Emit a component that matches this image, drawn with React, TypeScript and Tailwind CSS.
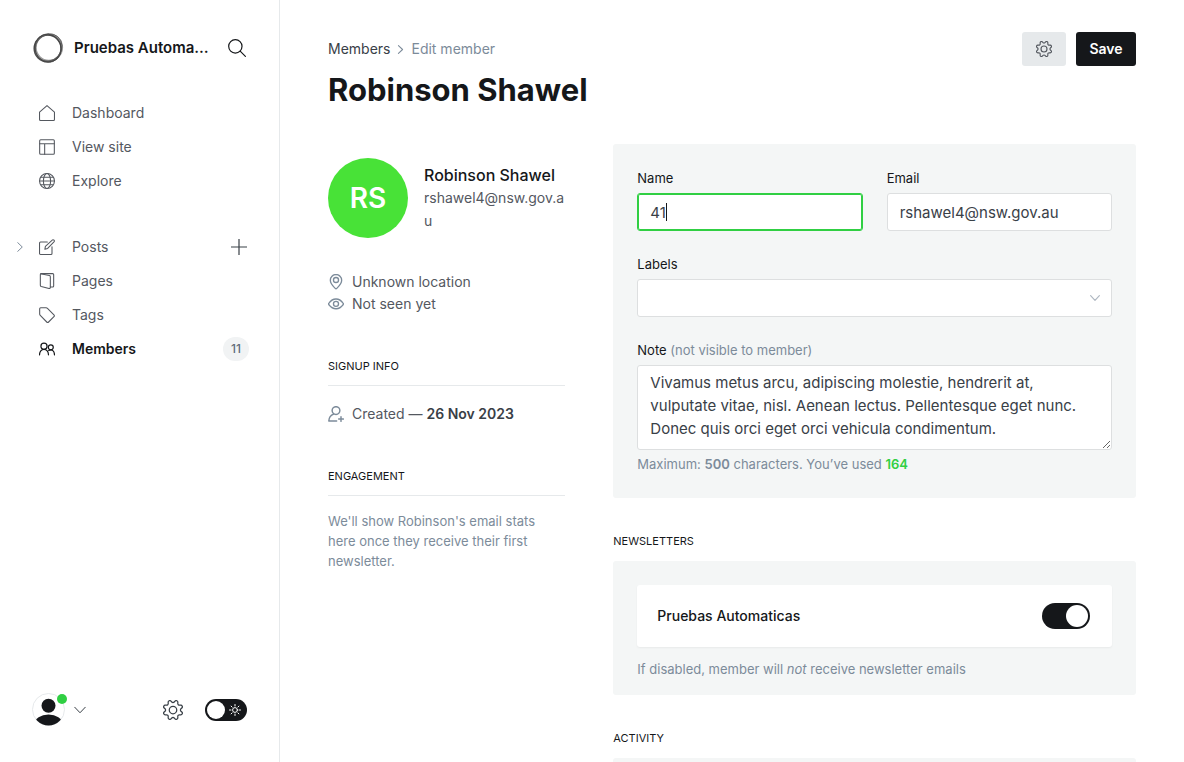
import React, { useEffect, useRef, useState } from "react";

type IconProps = { className?: string; children: React.ReactNode; box?: number; stroke?: number };

function Icon({ className = "size-4", children, box = 24, stroke = 1.5 }: IconProps) {
  return (
    <svg
      aria-hidden="true"
      className={`shrink-0 ${className}`}
      viewBox={`0 0 ${box} ${box}`}
      fill="none"
      stroke="currentColor"
      strokeWidth={stroke}
      strokeLinecap="round"
      strokeLinejoin="round"
    >
      {children}
    </svg>
  );
}

function Gear({ className, stroke = 1.5 }: { className?: string; stroke?: number }) {
  return (
    <Icon className={className} stroke={stroke}>
      <path d="M10.546 2.438a1.957 1.957 0 0 0 2.908 0L14.4 1.4a1.959 1.959 0 0 1 3.41 1.413l-.071 1.4a1.958 1.958 0 0 0 2.051 2.054l1.4-.071a1.959 1.959 0 0 1 1.41 3.41l-1.042.94a1.96 1.96 0 0 0 0 2.909l1.042.94a1.959 1.959 0 0 1-1.413 3.41l-1.4-.071a1.958 1.958 0 0 0-2.056 2.056l.071 1.4A1.959 1.959 0 0 1 14.4 22.6l-.941-1.041a1.959 1.959 0 0 0-2.908 0L9.606 22.6A1.959 1.959 0 0 1 6.2 21.192l.072-1.4a1.958 1.958 0 0 0-2.056-2.056l-1.4.071A1.958 1.958 0 0 1 1.4 14.4l1.041-.94a1.96 1.96 0 0 0 0-2.909L1.4 9.606A1.958 1.958 0 0 1 2.809 6.2l1.4.071a1.958 1.958 0 0 0 2.058-2.06L6.2 2.81A1.959 1.959 0 0 1 9.606 1.4z" />
      <circle cx="12" cy="12" r="4.5" />
    </Icon>
  );
}

function Chevron({ className, down = false, stroke = 1.5 }: { className?: string; down?: boolean; stroke?: number }) {
  return (
    <Icon className={className} stroke={stroke}>
      {down ? <path d="M1.5 6.5 12 17.5 22.5 6.5" /> : <path d="M6.5 1.5 17.5 12 6.5 22.5" />}
    </Icon>
  );
}

function Logo() {
  return (
    <svg aria-hidden="true" className="size-8 shrink-0" viewBox="0 0 32 32" fill="none">
      <circle cx="16.8" cy="15.6" r="13.2" stroke="#9a9a9a" strokeWidth="2.2" />
      <circle cx="15.6" cy="16.4" r="13.4" stroke="#4a4a4a" strokeWidth="1.5" />
      <ellipse cx="16.6" cy="15.6" rx="14.2" ry="12.8" stroke="#5c5c5c" strokeWidth="0.9" transform="rotate(-50 16.6 15.6)" />
      <ellipse cx="16" cy="16.2" rx="13" ry="14.2" stroke="#444" strokeWidth="0.8" transform="rotate(-20 16 16.2)" />
    </svg>
  );
}

const icons = {
  dashboard: <path d="M.8 10.6 12 .9l11.2 9.7v11.1a1.5 1.5 0 0 1-1.5 1.5H2.3a1.5 1.5 0 0 1-1.5-1.5z" />,
  site: (
    <>
      <rect x="1" y="1" width="22" height="22" rx="1.5" />
      <path d="M1 7h22M8.5 7v16" />
    </>
  ),
  explore: (
    <>
      <circle cx="12" cy="12" r="11.2" />
      <ellipse cx="12" cy="12" rx="5.4" ry="11.2" />
      <path d="M.8 12h22.4M2.6 6.5h18.8M2.6 17.5h18.8" />
    </>
  ),
  posts: (
    <>
      <path d="M12.5 4.5H2.3A1.5 1.5 0 0 0 .8 6v15.7a1.5 1.5 0 0 0 1.5 1.5H18a1.5 1.5 0 0 0 1.5-1.5V11.5" />
      <path d="M20.3 1.3a1.9 1.9 0 0 1 2.5 2.6L13 14.2l-4.2 1.2L9.6 11z" />
    </>
  ),
  pages: (
    <>
      <path d="M3.5.9h17A1.5 1.5 0 0 1 22 2.4v17a1.5 1.5 0 0 1-1.5 1.5H17" />
      <path d="M2.2 1.2 15.5 3.6A2 2 0 0 1 17 5.5v16.2a1.5 1.5 0 0 1-2 1.4L3.4 20.2A2 2 0 0 1 2 18.3V2.4A1.5 1.5 0 0 1 3.5.9" />
    </>
  ),
  tags: <path d="M1 2.5A1.5 1.5 0 0 1 2.5 1h8.100a3 3 0 0 1 2.100.9l9.700 9.800a2 2 0 0 1 0 2.800l-8 8a2 2 0 0 1-2.800 0l-9.700-9.800A3 3 0 0 1 1 10.600z" />,
  members: (
    <>
      <circle cx="7.5" cy="7.8" r="4.6" />
      <path d="M.8 20.800c0-4.600 2.800-8.300 6.700-8.300s6.700 3.700 6.700 8.300" />
      <circle cx="17.7" cy="9.5" r="3.7" />
      <path d="M14.600 14.400c5.100-3 8.600 1 8.600 6.400" />
    </>
  ),
};

function NavItem({ icon, label, active, lead, trail }: {
  icon: React.ReactNode; label: string; active?: boolean; lead?: React.ReactNode; trail?: React.ReactNode;
}) {
  return (
    <li className="flex h-[34px] items-center pr-[30px]">
      <span className="flex w-[39px] pl-[15px]">{lead}</span>
      <a
        href="#"
        className={`flex flex-1 items-center gap-[17px] text-sm ${active ? "font-semibold text-[#15171a]" : "text-[#54585f]"}`}
      >
        <Icon stroke={active ? 1.8 : 1.6}>{icon}</Icon>
        {label}
      </a>
      {trail}
    </li>
  );
}

function Sidebar() {
  return (
    <aside className="flex w-[280px] shrink-0 flex-col border-r border-[#e6e9eb]">
      <header className="flex items-center px-8 pt-8">
        <Logo />
        <p className="ml-[10px] w-[136px] truncate text-[15px] font-semibold">Pruebas Automaticas</p>
        <button aria-label="Search" className="ml-auto p-px">
          <Icon className="size-[18px]" stroke={1.6}>
            <circle cx="9.8" cy="9.8" r="8.9" />
            <path d="m16.200 16.200 7 7" />
          </Icon>
        </button>
      </header>
      <nav className="mt-8 flex flex-1 flex-col gap-8">
        <ul>
          <NavItem icon={icons.dashboard} label="Dashboard" />
          <NavItem icon={icons.site} label="View site" />
          <NavItem icon={icons.explore} label="Explore" />
        </ul>
        <ul>
          <NavItem
            icon={icons.posts}
            label="Posts"
            lead={
              <button aria-label="Expand posts" className="text-[#7c8b9a]">
                <Chevron className="size-[10px]" stroke={2.4} />
              </button>
            }
            trail={
              <button aria-label="New post" className="pr-[2px] text-[#394047]">
                <Icon className="size-4" stroke={1.8}><path d="M12 0v24M0 12h24" /></Icon>
              </button>
            }
          />
          <NavItem icon={icons.pages} label="Pages" />
          <NavItem icon={icons.tags} label="Tags" />
          <NavItem
            icon={icons.members}
            label="Members"
            active
            trail={<span className="flex h-6 w-[26px] items-center justify-center rounded-full bg-[#f1f3f4] text-xs font-medium text-[#626d79]">11</span>}
          />
        </ul>
      </nav>
      <footer className="flex items-center px-8 pb-9">
        <button aria-label="Account" className="flex items-center gap-[9px]">
          <span className="relative">
            <svg aria-hidden="true" className="size-[33px]" viewBox="0 0 33 33">
              <clipPath id="face"><circle cx="16.5" cy="16.5" r="16" /></clipPath>
              <circle cx="16.5" cy="16.5" r="16" fill="#fff" stroke="#e6e9eb" />
              <g clipPath="url(#face)" fill="#15171a">
                <circle cx="16.5" cy="12.8" r="7" />
                <ellipse cx="16.5" cy="31" rx="14" ry="9.5" />
              </g>
            </svg>
            <span className="absolute top-px -right-[2px] size-[10px] rounded-full bg-[#30cf43]" />
          </span>
          <Chevron down className="size-3 text-[#394047]" stroke={2} />
        </button>
        <button aria-label="Settings" className="ml-auto text-[#394047]">
          <Gear className="size-5" />
        </button>
        <label className="relative ml-[22px] flex">
          <input
            type="checkbox"
            aria-label="Dark mode"
            className="h-[22px] w-[42px] appearance-none rounded-full bg-[#15171a] before:m-[2px] before:block before:size-[18px] before:rounded-full before:bg-white checked:before:ml-[22px]"
          />
          <span className="pointer-events-none absolute top-[5px] right-[6px] text-white">
            <Icon className="size-3" stroke={2}>
              <circle cx="12" cy="12" r="4.8" />
              <path d="M12 1v3M12 20v3M1 12h3M20 12h3M4.200 4.200l2 2M17.800 17.800l2 2M4.200 19.800l2-2M17.800 6.200l2-2" />
            </Icon>
          </span>
        </label>
      </footer>
    </aside>
  );
}

function InfoHeading({ children }: { children: React.ReactNode }) {
  return <h3 className="border-b border-[#e6e9eb] pb-[9px] text-[11px] leading-5 uppercase">{children}</h3>;
}

function Profile() {
  return (
    <section className="pt-[14px] text-sm leading-[22px] text-[#54585f]">
      <div className="flex items-center gap-4">
        <div className="flex size-20 shrink-0 items-center justify-center rounded-full bg-[#48e237] text-[28px] font-semibold text-white">
          RS
        </div>
        <div className="min-w-0">
          <h2 className="text-base leading-[22px] font-medium text-[#15171a]">Robinson Shawel</h2>
          <p className="leading-[23px] break-all">rshawel4@nsw.gov.au</p>
        </div>
      </div>
      <div className="mt-[33px]">
        <p className="flex items-center gap-2">
          <Icon className="size-4 text-[#7c8b9a]" stroke={2}>
            <path d="M20.500 9.300c0 4.800-5 10-7.300 12.300a1.700 1.700 0 0 1-2.400 0C8.500 19.300 3.500 14.100 3.500 9.300a8.500 8.500 0 0 1 17 0z" />
            <circle cx="12" cy="9" r="3.8" />
          </Icon>
          Unknown location
        </p>
        <p className="flex items-center gap-2">
          <Icon className="size-4 text-[#7c8b9a]" stroke={2}>
            <path d="M12 4.500c4.300-.1 8.300 3 10.600 6.100a2 2 0 0 1 0 2.500c-2.300 3-6.200 6.100-10.400 6-4.400.1-8.500-3-10.800-6a2 2 0 0 1 0-2.500C3.700 7.500 7.700 4.400 12 4.500z" />
            <circle cx="12" cy="11.8" r="3.8" />
          </Icon>
          Not seen yet
        </p>
      </div>
      <div className="mt-[41px] text-[#15171a]">
        <InfoHeading>Signup info</InfoHeading>
      </div>
      <p className="mt-[17px] flex items-center gap-2">
        <Icon className="size-4 text-[#7c8b9a]" stroke={2.2}>
          <circle cx="12" cy="6.8" r="5.8" />
          <path d="M8.500 12.200C4.300 13.600 1.500 17 1.200 22.500H13M19.500 16v7M16 19.500h7" />
        </Icon>
        <span>Created — <strong className="font-semibold text-[#394047]">26 Nov 2023</strong></span>
      </p>
      <div className="mt-[41px] text-[#15171a]">
        <InfoHeading>Engagement</InfoHeading>
      </div>
      <p className="mt-[15px] text-[13px] leading-5 text-[#7c8b9a]">
        We'll show Robinson's email stats here once they receive their first newsletter.
      </p>
    </section>
  );
}

const labelStyle = "block text-[13px] leading-5 mb-[5px] text-[#15171a]";
const fieldStyle =
  "block w-full rounded-[3px] border border-[#dddfe0] bg-white px-3 text-[15px] text-[#394047] outline-none focus:border-[#30cf43] focus:ring-1 focus:ring-inset focus:ring-[#30cf43]";

function MemberForm() {
  const nameRef = useRef<HTMLInputElement>(null);
  const [name, setName] = useState("41");
  const [note, setNote] = useState(
    "Vivamus metus arcu, adipiscing molestie, hendrerit at, vulputate vitae, nisl. Aenean lectus. Pellentesque eget nunc. Donec quis orci eget orci vehicula condimentum."
  );
  useEffect(() => {
    const field = nameRef.current;
    field?.focus();
    field?.setSelectionRange(field.value.length, field.value.length);
  }, []);
  return (
    <form className="rounded-[3px] bg-[#f4f6f6] p-6">
      <div className="grid grid-cols-2 gap-6">
        <div>
          <label htmlFor="name" className={labelStyle}>Name</label>
          <div className="relative">
            <input
              id="name"
              ref={nameRef}
              value={name}
              onChange={(e) => setName(e.target.value)}
              className={`${fieldStyle} peer h-[38px]`}
            />
            {name === "41" && (
              <span className="pointer-events-none absolute top-[10px] left-[29px] hidden h-[18px] w-px bg-[#15171a] peer-focus:block" />
            )}
          </div>
        </div>
        <div>
          <label htmlFor="email" className={labelStyle}>Email</label>
          <input id="email" type="email" defaultValue="rshawel4@nsw.gov.au" className={`${fieldStyle} h-[38px]`} />
        </div>
      </div>
      <div className="mt-[23px]">
        <label htmlFor="labels" className={labelStyle}>Labels</label>
        <div className="relative">
          <select id="labels" className={`${fieldStyle} h-[38px] appearance-none`}>
            <option value="" />
          </select>
          <span className="pointer-events-none absolute inset-y-0 right-3 flex items-center text-[#aeb7c1]">
            <Chevron down className="size-[10px]" stroke={2.8} />
          </span>
        </div>
      </div>
      <div className="mt-[23px]">
        <label htmlFor="note" className={labelStyle}>
          Note <span className="text-[#7c8b9a]">(not visible to member)</span>
        </label>
        <textarea
          id="note"
          value={note}
          onChange={(e) => setNote(e.target.value)}
          className={`${fieldStyle} h-[85px] resize py-[5px] leading-[23px]`}
        />
        <p className="mt-1 text-[13px] leading-5 text-[#7c8b9a]">
          Maximum: <b className="font-semibold">500</b> characters. You’ve used{" "}
          <span className="font-semibold text-[#30cf43]">{note.length}</span>
        </p>
      </div>
    </form>
  );
}

function SectionHeading({ children }: { children: React.ReactNode }) {
  return <h3 className="mt-[33px] mb-[10px] text-[11px] leading-5 uppercase">{children}</h3>;
}

export default function App() {
  return (
    <div className="flex h-screen bg-white font-['Inter',sans-serif] text-[#15171a]">
      <Sidebar />
      <main className="min-w-0 flex-1 overflow-y-auto px-12 pb-12 [scrollbar-width:none]">
        <header className="flex items-start justify-between pt-8">
          <div>
            <nav aria-label="Breadcrumb" className="flex h-[34px] items-center gap-[6px] text-sm">
              <a href="#" className="text-[#394047]">Members</a>
              <Chevron className="size-[9px] text-[#7c8b9a]" stroke={2.8} />
              <span className="text-[#7c8b9a]">Edit member</span>
            </nav>
            <h1 className="mt-1 text-[31px] leading-10 font-bold">Robinson Shawel</h1>
          </div>
          <div className="flex gap-[10px]">
            <button aria-label="Member actions" className="flex h-[34px] w-11 items-center justify-center rounded-[3px] bg-[#e6e9eb] text-[#54585f]">
              <Gear className="size-4" stroke={1.7} />
            </button>
            <button className="h-[34px] w-[60px] rounded-[3px] bg-[#15171a] text-sm font-semibold text-white">Save</button>
          </div>
        </header>
        <div className="mt-[34px] grid grid-cols-3 gap-12">
          <Profile />
          <div className="col-span-2">
            <MemberForm />
            <SectionHeading>Newsletters</SectionHeading>
            <section className="rounded-[3px] bg-[#f4f6f6] px-6 pt-6 pb-4">
              <label className="flex h-[62px] items-center justify-between rounded-[3px] bg-white pr-[22px] pl-5 text-sm font-medium shadow-xs">
                Pruebas Automaticas
                <input
                  type="checkbox"
                  defaultChecked
                  className="h-[26px] w-12 appearance-none rounded-full bg-[#c8ced3] before:m-[2px] before:block before:size-[22px] before:rounded-full before:bg-white checked:bg-[#15171a] checked:before:ml-6"
                />
              </label>
              <p className="mt-3 text-[13px] leading-5 text-[#7c8b9a]">
                If disabled, member will <em>not</em> receive newsletter emails
              </p>
            </section>
            <SectionHeading>Activity</SectionHeading>
            <section className="rounded-[3px] bg-[#f4f6f6] p-6" aria-label="Activity">
              <div className="h-24" />
            </section>
          </div>
        </div>
      </main>
    </div>
  );
}
